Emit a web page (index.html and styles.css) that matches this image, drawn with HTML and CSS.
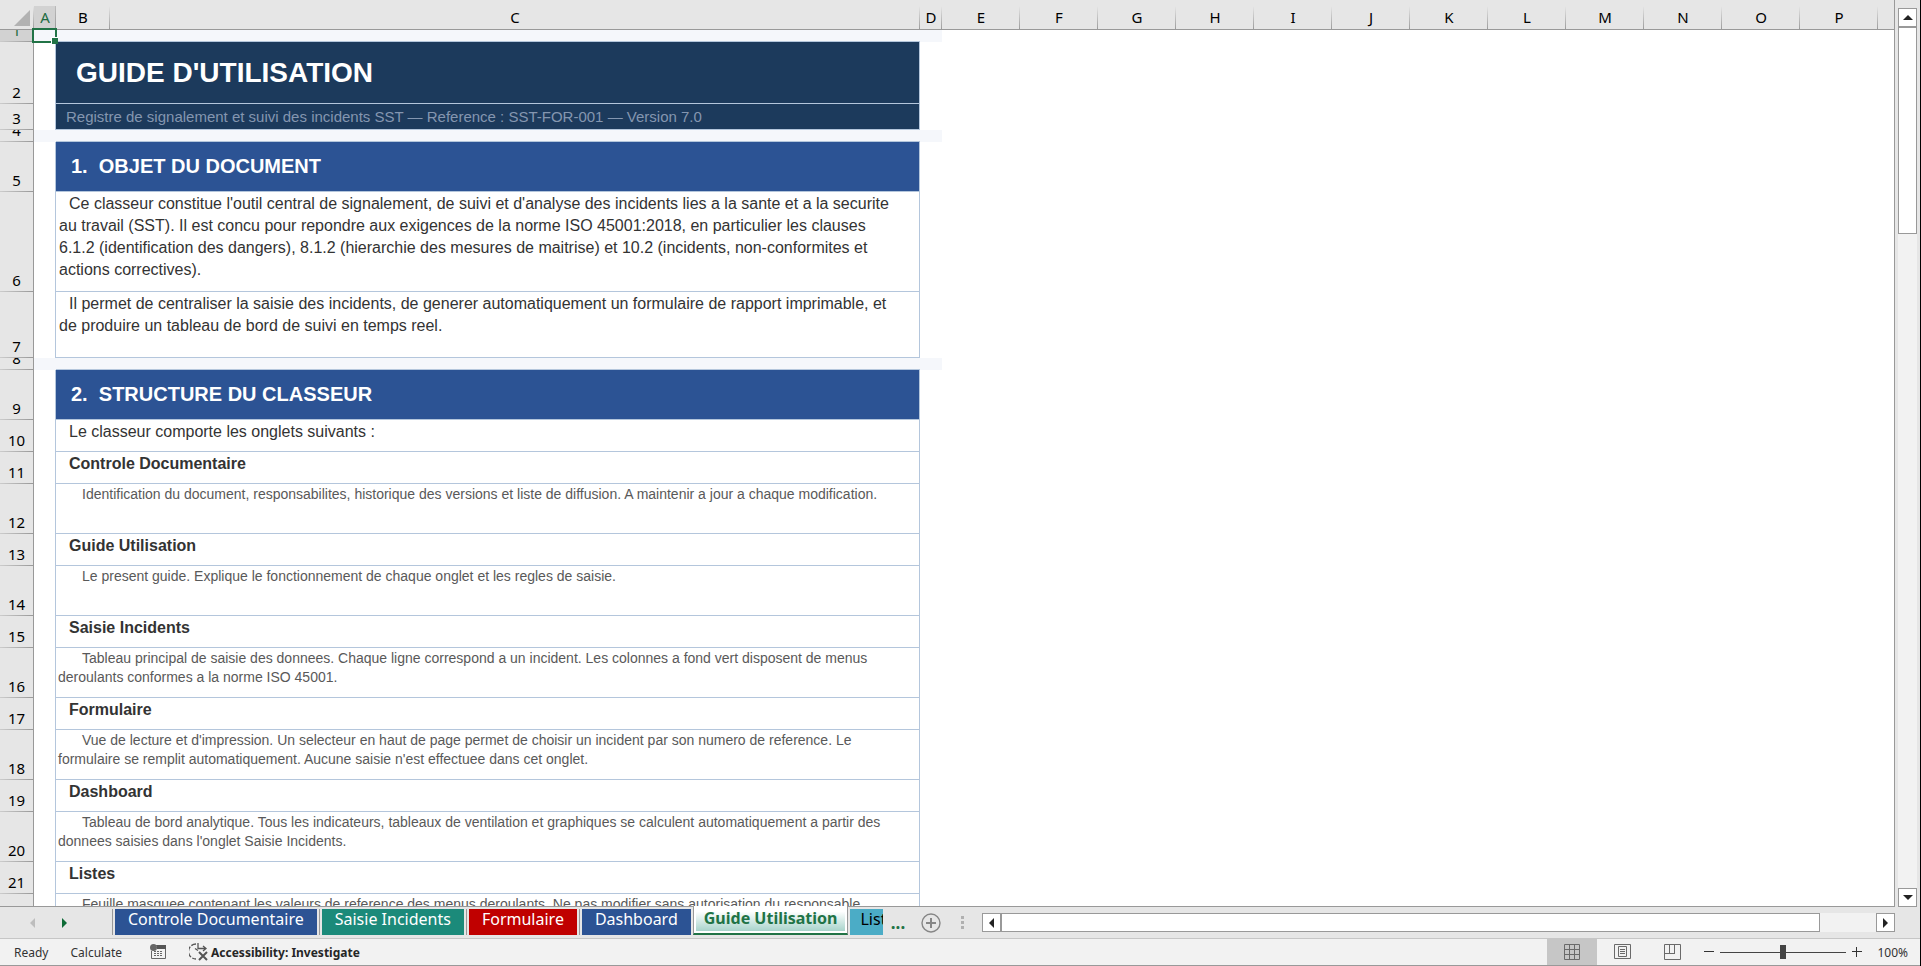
FILE: index.html
```
<!DOCTYPE html>
<html lang="fr">

<head>
    <meta charset="UTF-8">
    <meta name="viewport" content="width=device-width, initial-scale=1.0">
    <title>Guide Utilisation</title>
    <link rel="stylesheet" href="styles.css">
</head>

<body>
    <main class="workspace">
        <div class="sheet">
            <table class="grid">
                <colgroup>
                    <col class="col-head">
                    <col class="col-narrow">
                    <col class="col-b">
                    <col class="col-c">
                    <col class="col-narrow">
                    <col class="col-std" span="13">
                </colgroup>
                <thead>
                    <tr>
                        <th class="corner"><svg width="16" height="16" viewBox="0 0 16 16"><path d="M16 0V16H0z" fill="#b2b2b2"/></svg></th>
                        <th class="selected">A</th>
                        <th>B</th>
                        <th>C</th>
                        <th>D</th>
                        <th>E</th>
                        <th>F</th>
                        <th>G</th>
                        <th>H</th>
                        <th>I</th>
                        <th>J</th>
                        <th>K</th>
                        <th>L</th>
                        <th>M</th>
                        <th>N</th>
                        <th>O</th>
                        <th>P</th>
                        <th></th>
                    </tr>
                </thead>
                <tbody>
                    <tr class="row-gap">
                        <th class="selected"><div class="num">1</div></th>
                        <td class="active-cell"><div class="selection"></div></td>
                        <td colspan="2" class="line"></td>
                        <td></td>
                    </tr>
                    <tr class="row-title">
                        <th><div class="num">2</div></th>
                        <td class="edge"></td>
                        <td colspan="2" class="cell title">GUIDE D'UTILISATION</td>
                    </tr>
                    <tr class="row-sub">
                        <th><div class="num">3</div></th>
                        <td class="edge"></td>
                        <td colspan="2" class="cell subtitle">Registre de signalement et suivi des incidents SST — Reference : SST-FOR-001 — Version 7.0</td>
                    </tr>
                    <tr class="row-gap">
                        <th><div class="num">4</div></th>
                        <td></td>
                        <td colspan="2" class="line"></td>
                        <td></td>
                    </tr>
                    <tr class="row-mid">
                        <th><div class="num">5</div></th>
                        <td class="edge"></td>
                        <td colspan="2" class="cell section">1.&nbsp; OBJET DU DOCUMENT</td>
                    </tr>
                    <tr class="row-text4">
                        <th><div class="num">6</div></th>
                        <td class="edge"></td>
                        <td colspan="2" class="cell text">Ce classeur constitue l'outil central de signalement, de suivi et d'analyse des incidents lies a la sante et a la securite<br>
                            <span>au travail (SST). Il est concu pour repondre aux exigences de la norme ISO 45001:2018, en particulier les clauses</span><br>
                            <span>6.1.2 (identification des dangers), 8.1.2 (hierarchie des mesures de maitrise) et 10.2 (incidents, non-conformites et</span><br>
                            <span>actions correctives).</span></td>
                    </tr>
                    <tr class="row-text2">
                        <th><div class="num">7</div></th>
                        <td class="edge"></td>
                        <td colspan="2" class="cell text">Il permet de centraliser la saisie des incidents, de generer automatiquement un formulaire de rapport imprimable, et<br>
                            de produire un tableau de bord de suivi en temps reel.</td>
                    </tr>
                    <tr class="row-gap">
                        <th><div class="num">8</div></th>
                        <td></td>
                        <td colspan="2" class="line"></td>
                        <td></td>
                    </tr>
                    <tr class="row-mid">
                        <th><div class="num">9</div></th>
                        <td class="edge"></td>
                        <td colspan="2" class="cell section">2.&nbsp; STRUCTURE DU CLASSEUR</td>
                    </tr>
                    <tr class="row-label">
                        <th><div class="num">10</div></th>
                        <td class="edge"></td>
                        <td colspan="2" class="cell text">Le classeur comporte les onglets suivants :</td>
                    </tr>
                    <tr class="row-label">
                        <th><div class="num">11</div></th>
                        <td class="edge"></td>
                        <td colspan="2" class="cell text name">Controle Documentaire</td>
                    </tr>
                    <tr class="row-mid">
                        <th><div class="num">12</div></th>
                        <td class="edge"></td>
                        <td colspan="2" class="cell desc">Identification du document, responsabilites, historique des versions et liste de diffusion. A maintenir a jour a chaque modification.</td>
                    </tr>
                    <tr class="row-label">
                        <th><div class="num">13</div></th>
                        <td class="edge"></td>
                        <td colspan="2" class="cell text name">Guide Utilisation</td>
                    </tr>
                    <tr class="row-mid">
                        <th><div class="num">14</div></th>
                        <td class="edge"></td>
                        <td colspan="2" class="cell desc">Le present guide. Explique le fonctionnement de chaque onglet et les regles de saisie.</td>
                    </tr>
                    <tr class="row-label">
                        <th><div class="num">15</div></th>
                        <td class="edge"></td>
                        <td colspan="2" class="cell text name">Saisie Incidents</td>
                    </tr>
                    <tr class="row-mid">
                        <th><div class="num">16</div></th>
                        <td class="edge"></td>
                        <td colspan="2" class="cell desc">Tableau principal de saisie des donnees. Chaque ligne correspond a un incident. Les colonnes a fond vert disposent de menus<br>
                            deroulants conformes a la norme ISO 45001.</td>
                    </tr>
                    <tr class="row-label">
                        <th><div class="num">17</div></th>
                        <td class="edge"></td>
                        <td colspan="2" class="cell text name">Formulaire</td>
                    </tr>
                    <tr class="row-mid">
                        <th><div class="num">18</div></th>
                        <td class="edge"></td>
                        <td colspan="2" class="cell desc">Vue de lecture et d'impression. Un selecteur en haut de page permet de choisir un incident par son numero de reference. Le<br>
                            formulaire se remplit automatiquement. Aucune saisie n'est effectuee dans cet onglet.</td>
                    </tr>
                    <tr class="row-label">
                        <th><div class="num">19</div></th>
                        <td class="edge"></td>
                        <td colspan="2" class="cell text name">Dashboard</td>
                    </tr>
                    <tr class="row-mid">
                        <th><div class="num">20</div></th>
                        <td class="edge"></td>
                        <td colspan="2" class="cell desc">Tableau de bord analytique. Tous les indicateurs, tableaux de ventilation et graphiques se calculent automatiquement a partir des<br>
                            donnees saisies dans l'onglet Saisie Incidents.</td>
                    </tr>
                    <tr class="row-label">
                        <th><div class="num">21</div></th>
                        <td class="edge"></td>
                        <td colspan="2" class="cell text name">Listes</td>
                    </tr>
                    <tr class="row-mid">
                        <th></th>
                        <td class="edge"></td>
                        <td colspan="2" class="cell desc">Feuille masquee contenant les valeurs de reference des menus deroulants. Ne pas modifier sans autorisation du responsable</td>
                    </tr>
                </tbody>
            </table>
        </div>
        <div class="vscroll">
            <button class="arrow" aria-label="Scroll up"><svg width="10" height="5" viewBox="0 0 10 5"><path d="M5 0L10 5H0z"/></svg></button>
            <div class="vthumb"></div>
            <div class="track"></div>
            <button class="arrow" aria-label="Scroll down"><svg width="10" height="5" viewBox="0 0 10 5"><path d="M0 0H10L5 5z"/></svg></button>
        </div>
    </main>

    <nav class="tabbar">
        <div class="tab-nav">
            <button aria-label="Previous sheet"><svg width="5" height="10" viewBox="0 0 5 10"><path d="M5 0V10L0 5z" fill="#bdbdbd"/></svg></button>
            <button aria-label="Next sheet"><svg width="5" height="10" viewBox="0 0 5 10"><path d="M0 0L5 5L0 10z" fill="#0e6b37"/></svg></button>
        </div>
        <div class="tabs">
            <div class="slot"><button class="tab blue">Controle Documentaire</button></div>
            <div class="slot"><button class="tab teal">Saisie Incidents</button></div>
            <div class="slot"><button class="tab red">Formulaire</button></div>
            <div class="slot"><button class="tab blue">Dashboard</button></div>
            <button class="tab active">Guide Utilisation</button>
            <div class="slot last"><button class="tab cyan">Listes</button></div>
        </div>
        <button class="more" aria-label="More sheets">...</button>
        <button class="add" aria-label="New sheet"><svg width="20" height="20" viewBox="0 0 20 20" fill="none" stroke="#868686"><circle cx="10" cy="10" r="9" stroke-width="1.4"/><path d="M10 5V15M5 10H15" stroke-width="2"/></svg></button>
        <svg class="grip" width="3" height="14" viewBox="0 0 3 14" fill="#b0b0b0"><path d="M0 0H3V3H0zM0 5H3V8H0zM0 10H3V13H0z"/></svg>
        <div class="hscroll">
            <button class="arrow" aria-label="Scroll left"><svg width="5" height="10" viewBox="0 0 5 10"><path d="M5 0V10L0 5z"/></svg></button>
            <div class="hthumb"></div>
            <div class="htrack"></div>
            <button class="arrow" aria-label="Scroll right"><svg width="5" height="10" viewBox="0 0 5 10"><path d="M0 0L5 5L0 10z"/></svg></button>
        </div>
    </nav>

    <footer class="status">
        <span class="ready">Ready</span>
        <span class="calc">Calculate</span>
        <button class="macro" aria-label="Record macro"><svg width="16" height="16" viewBox="0 0 16 16"><path d="M6 1.500H15.500V14.500H1.500V7" fill="none" stroke="#666"/><path d="M7 1H16V5H7z" fill="#555"/><circle cx="3.500" cy="3.500" r="3.500" fill="#666"/><path d="M4 7.500H13M4 9.500H13M4 11.500H13" stroke="#666" stroke-dasharray="2 1"/></svg></button>
        <button class="access"><svg width="20" height="18" viewBox="0 0 20 18" fill="none" stroke="#555" stroke-width="1.3"><path d="M7 1A7.500 7.500 0 0 0 7 16" stroke-dasharray="5 1.500"/><path d="M9 0V6M6 5.500L9 7.500M9 5.500H17M14 3L17 5.500L14 8"/><path d="M10 9L18 17M18 9L10 17" stroke-width="2"/></svg>Accessibility: Investigate</button>
        <div class="views">
            <button class="view on" aria-label="Normal"><svg width="16" height="16" viewBox="0 0 16 16" fill="none" stroke="#6a6a6a"><path d="M.5 .5H15.500V15.500H.5zM5.500 0V16M10.500 0V16M0 5.500H16M0 10.500H16"/></svg></button>
            <button class="view" aria-label="Page layout"><svg width="17" height="16" viewBox="0 0 17 16" fill="none" stroke="#6a6a6a"><path d="M.5 .5H16.500V14.500H.5zM4.500 2.500H12.500V12.500H4.500zM6 5.500H11M6 7.500H11M6 9.500H11"/></svg></button>
            <button class="view" aria-label="Page break preview"><svg width="17" height="16" viewBox="0 0 17 16" fill="none" stroke="#6a6a6a"><path d="M.5 .5H16.500V15.500H.5zM5.500 0V9M10.500 0V9.500M0 9.500H11"/></svg></button>
        </div>
        <div class="zoom">
            <button aria-label="Zoom out"><svg width="10" height="10" viewBox="0 0 10 10"><path d="M0 4.500H10" stroke="#333"/></svg></button>
            <input type="range" min="0" max="100" value="50" aria-label="Zoom">
            <button aria-label="Zoom in"><svg width="10" height="10" viewBox="0 0 10 10"><path d="M0 4.500H10M4.500 0V10" stroke="#333"/></svg></button>
            <span class="percent">100%</span>
        </div>
    </footer>
</body>

</html>
```
FILE: styles.css
```
* {
    margin: 0;
    padding: 0;
    box-sizing: border-box;
}

body {
    height: 100vh;
    display: flex;
    flex-direction: column;
    overflow: hidden;
    background-color: #e6e6e6;
    border-right: 1px solid #000;
    font-family: "Noto Sans", "Open Sans", sans-serif;
}

button {
    border: 0;
    background: none;
    font-family: inherit;
    display: flex;
    align-items: center;
    justify-content: center;
}

svg {
    display: block;
    flex: none;
}

/* sheet area */

.workspace {
    flex: 1;
    min-height: 0;
    display: flex;
}

.sheet {
    flex: 1;
    min-width: 0;
    overflow: hidden;
    background: linear-gradient(#e6e6e6 29px, #fff 29px);
    border-right: 1px solid #999;
    border-bottom: 1px solid #999;
}

.grid {
    table-layout: fixed;
    border-collapse: separate;
    border-spacing: 0;
    width: 1956px;
    font-family: "Liberation Sans", Arial, sans-serif;
}

.col-head {
    width: 34px;
}

.col-narrow {
    width: 22px;
}

.col-b {
    width: 54px;
}

.col-c {
    width: 810px;
}

.col-std {
    width: 78px;
}

.grid th {
    font-family: "Noto Sans", "Open Sans", sans-serif;
    font-size: 15px;
    font-weight: 400;
    color: #000;
}

.grid thead th {
    height: 30px;
    padding: 7px 0 2px;
    line-height: 20px;
    background: linear-gradient(#e6e6e6, #999) right 6px / 1px 24px no-repeat #e6e6e6;
    border-bottom: 1px solid #999;
}

.grid thead .corner {
    padding: 10px 3px 3px 14px;
}

.grid thead .selected {
    color: #1e6b42;
    background: linear-gradient(#bbb, #999) right 6px / 1px 24px no-repeat, linear-gradient(#e6e6e6 6px, #d2d2d2 6px);
}

.grid tbody th {
    vertical-align: bottom;
    background: linear-gradient(90deg, #ccc, #999) bottom / 100% 1px no-repeat #e6e6e6;
    border-right: 1px solid #999;
}

.grid tbody .selected {
    color: #1e6b42;
    background-color: #d2d2d2;
}

.num {
    display: flex;
    align-items: flex-end;
    justify-content: center;
    line-height: 20px;
    padding-bottom: 2px;
}

.row-gap {
    height: 12px;
}

.row-gap .num {
    height: 12px;
    overflow: hidden;
}

.row-gap td {
    background-color: #f5f7fb;
}

.row-title {
    height: 62px;
}

.row-sub {
    height: 26px;
}

.row-mid {
    height: 50px;
}

.row-label {
    height: 32px;
}

.row-text2 {
    height: 66px;
}

.row-text4 {
    height: 100px;
}

.line {
    border-bottom: 1px solid #b4c6dc;
}

.edge {
    border-right: 1px solid #b4c6dc;
}

.cell {
    border-right: 1px solid #b4c6dc;
    border-bottom: 1px solid #b4c6dc;
    vertical-align: top;
}

.title {
    background-color: #1c3a5c;
    color: #fff;
    font-size: 28px;
    font-weight: 700;
    vertical-align: middle;
    padding-left: 20px;
}

.subtitle {
    background-color: #1c3a5c;
    color: #8496b0;
    font-size: 15px;
    vertical-align: middle;
    padding-left: 10px;
}

.section {
    background-color: #2c5394;
    color: #fff;
    font-size: 20px;
    font-weight: 700;
    vertical-align: middle;
    padding-left: 15px;
}

.text {
    color: #333;
    font-size: 16px;
    line-height: 22px;
    padding: 1px 8px 0 3px;
    text-indent: 10px;
}

.name {
    font-weight: 700;
}

.desc {
    color: #595959;
    font-size: 14px;
    line-height: 19px;
    padding: 1px 4px 0 2px;
    text-indent: 24px;
}

.active-cell {
    position: relative;
}

.selection {
    position: absolute;
    inset: -2px -1px -1px -2px;
    border: 2px solid #217346;
    z-index: 1;
}

.selection::after {
    content: "";
    position: absolute;
    right: -3px;
    bottom: -3px;
    width: 6px;
    height: 6px;
    background-color: #217346;
    border-top: 1px solid #fff;
    border-left: 1px solid #fff;
}

/* scrollbars */

.arrow {
    flex: none;
    width: 19px;
    height: 19px;
    background-color: #fff;
    border: 1px solid #999;
    fill: #222;
}

.vscroll {
    display: flex;
    flex-direction: column;
    width: 19px;
    margin: 8px 3px 0;
}

.vthumb {
    height: 207px;
    background-color: #fff;
    border: 1px solid #999;
}

.track {
    flex: 1;
    background-color: #f2f2f2;
}

.hscroll {
    flex: 1;
    display: flex;
    margin-right: 25px;
}

.hthumb {
    flex: 820;
    background-color: #fff;
    border: 1px solid #999;
}

.htrack {
    flex: 56;
    background-color: #f2f2f2;
}

/* sheet tabs */

.tabbar {
    height: 32px;
    display: flex;
    align-items: center;
    border-bottom: 1px solid #c6c6c6;
}

.tab-nav {
    width: 112px;
    display: flex;
    gap: 27px;
    padding-left: 30px;
}

.tabs {
    align-self: flex-start;
    display: flex;
    align-items: flex-start;
    width: 771px;
    height: 29px;
    margin-top: -1px;
    overflow: hidden;
}

.slot {
    flex: none;
    margin-top: 3px;
    padding: 0 2px;
    border-left: 1px solid #999;
}

.last {
    border-left: 0;
}

.tab {
    height: 26px;
    padding: 0 13px 6px;
    color: #fff;
    font-size: 16px;
    line-height: 20px;
    white-space: nowrap;
}

.blue {
    background-color: #2c5394;
}

.teal {
    background-color: #1b8a7a;
}

.red {
    background-color: #c00000;
}

.cyan {
    padding-left: 10px;
    background-color: #4bacc6;
    color: #000;
}

.active {
    flex: none;
    height: 29px;
    padding: 0 10px 4px;
    color: #217346;
    font-weight: 700;
    background: linear-gradient(#fff 20%, #9fcfc6);
    box-shadow: inset 0 0 0 2px #fff;
    border: 1px solid #999;
    border-width: 0 1px 2px;
    border-bottom-color: #217346;
}

.more {
    width: 30px;
    color: #217346;
    font-size: 17px;
    font-weight: 700;
}

.add {
    margin-left: 8px;
}

.grip {
    margin: 0 18px 0 20px;
}

/* status bar */

.status {
    height: 27px;
    display: flex;
    align-items: center;
    background-color: #f2f2f2;
    border-bottom: 1px solid #999;
    color: #333;
    font-size: 12px;
}

.ready {
    margin-left: 14px;
}

.calc {
    margin-left: 22px;
}

.macro {
    margin-left: 28px;
}

.access {
    margin-left: 23px;
    gap: 2px;
    color: #262626;
    font-size: 12px;
    font-weight: 700;
}

.views {
    display: flex;
    align-self: stretch;
    margin-left: auto;
}

.view {
    width: 50px;
}

.on {
    background-color: #c6c6c6;
}

.zoom {
    display: flex;
    align-items: center;
    gap: 6px;
    margin-left: 7px;
    padding-right: 12px;
}

.zoom input {
    appearance: none;
    width: 126px;
    height: 14px;
    background: linear-gradient(#444, #444) center / 100% 1px no-repeat;
}

.zoom input::-webkit-slider-thumb {
    appearance: none;
    width: 6px;
    height: 14px;
    background-color: #444;
}

.percent {
    margin-left: 9px;
}
```
